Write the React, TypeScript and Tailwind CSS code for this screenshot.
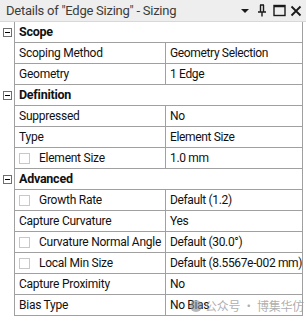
import React from "react";

type Row =
    | { kind: "cat"; label: string }
    | { kind: "prop"; label: string; value: string; check?: boolean };

const rows: Row[] = [
    { kind: "cat", label: "Scope" },
    { kind: "prop", label: "Scoping Method", value: "Geometry Selection" },
    { kind: "prop", label: "Geometry", value: "1 Edge" },
    { kind: "cat", label: "Definition" },
    { kind: "prop", label: "Suppressed", value: "No" },
    { kind: "prop", label: "Type", value: "Element Size" },
    { kind: "prop", label: "Element Size", value: "1.0 mm", check: true },
    { kind: "cat", label: "Advanced" },
    { kind: "prop", label: "Growth Rate", value: "Default (1.2)", check: true },
    { kind: "prop", label: "Capture Curvature", value: "Yes" },
    { kind: "prop", label: "Curvature Normal Angle", value: "Default (30.0°)", check: true },
    { kind: "prop", label: "Local Min Size", value: "Default (8.5567e-002 mm)", check: true },
    { kind: "prop", label: "Capture Proximity", value: "No" },
    { kind: "prop", label: "Bias Type", value: "No Bias" },
];

function Minus() {
    return (
        <div className="w-[9px] h-[9px] border border-[#6e6e6e] bg-white flex items-center justify-center">
            <div className="w-[5px] h-px bg-black" />
        </div>
    );
}

function TitleBar() {
    return (
        <div className="h-[22px] bg-[#eeeeee] flex items-center pl-[6px] pr-[4px] border-b border-[#d8d8d8]">
            <span className="text-[13px] text-[#3c3c3c] whitespace-nowrap">
                Details of "Edge Sizing" - Sizing
            </span>
            <div className="flex-1 h-[5px] mx-[5px] bg-[radial-gradient(#c4c4c4_0.6px,transparent_0.7px)] bg-[length:2px_2px]" />
            <svg width="10" height="8" viewBox="0 0 10 8" className="mr-[7px]">
                <path d="M1 2 L9 2 L5 6 Z" fill="#1a1a1a" />
            </svg>
            <svg width="10" height="13" viewBox="0 0 10 13" className="mr-[6px]">
                <path d="M3 1 H7 M3.5 1 V8 M6.5 1 V8 M1 8 H9 M5 8 V12.5" stroke="#1a1a1a" strokeWidth="1.4" fill="none" />
            </svg>
            <svg width="13" height="13" viewBox="0 0 13 13" className="mr-[4px]">
                <rect x="1" y="1.5" width="11" height="10" stroke="#1a1a1a" strokeWidth="1.4" fill="none" />
                <path d="M1 2.5 H12" stroke="#1a1a1a" strokeWidth="1.5" />
            </svg>
            <svg width="12" height="12" viewBox="0 0 12 12">
                <path d="M1.5 1.5 L10.5 10.5 M10.5 1.5 L1.5 10.5" stroke="#1a1a1a" strokeWidth="1.8" />
            </svg>
        </div>
    );
}

export default function App() {
    return (
        <div
            className="w-[306px] h-[321px] bg-white relative overflow-hidden text-[12px] tracking-[-0.25px] text-[#111]"
            style={{ fontFamily: 'Roboto, "Noto Sans", sans-serif' }}
        >
            <TitleBar />
            <div className="flex">
                <div className="w-[14px] flex flex-col">
                    {rows.map((r, i) => (
                        <div key={i} className="h-[21px] flex items-center pl-[3px]">
                            {r.kind === "cat" && <Minus />}
                        </div>
                    ))}
                </div>
                <div className="w-[289px] border-l border-r border-[#a0a0a0] flex flex-col">
                    {rows.map((r, i) =>
                        r.kind === "cat" ? (
                            <div
                                key={i}
                                className="h-[21px] border-b border-[#a0a0a0] flex items-center pl-[4px] font-bold text-[12.5px]"
                            >
                                {r.label}
                            </div>
                        ) : (
                            <div key={i} className="h-[21px] border-b border-[#a0a0a0] flex">
                                <div className="w-[151px] border-r border-[#a0a0a0] flex items-center pl-[4px] whitespace-nowrap overflow-hidden">
                                    {r.check && (
                                        <div className="w-[11px] h-[11px] border border-[#c8c8c8] mr-[9px] shrink-0" />
                                    )}
                                    {r.label}
                                </div>
                                <div className="flex-1 flex items-center pl-[4px] tracking-[-0.35px] whitespace-nowrap overflow-hidden">
                                    {r.value}
                                </div>
                            </div>
                        )
                    )}
                </div>
            </div>
            <div className="absolute left-[190px] top-[297px] flex items-center text-[12px] text-[#9a9a9a]/80 whitespace-nowrap">
                <div className="w-[12px] h-[12px] rounded-full bg-[#8a8a8a]/60 mr-[3px]" />
                <span style={{ fontFamily: '"Noto Sans CJK SC", sans-serif' }}>公众号 · 博集华仿</span>
            </div>
        </div>
    );
}
